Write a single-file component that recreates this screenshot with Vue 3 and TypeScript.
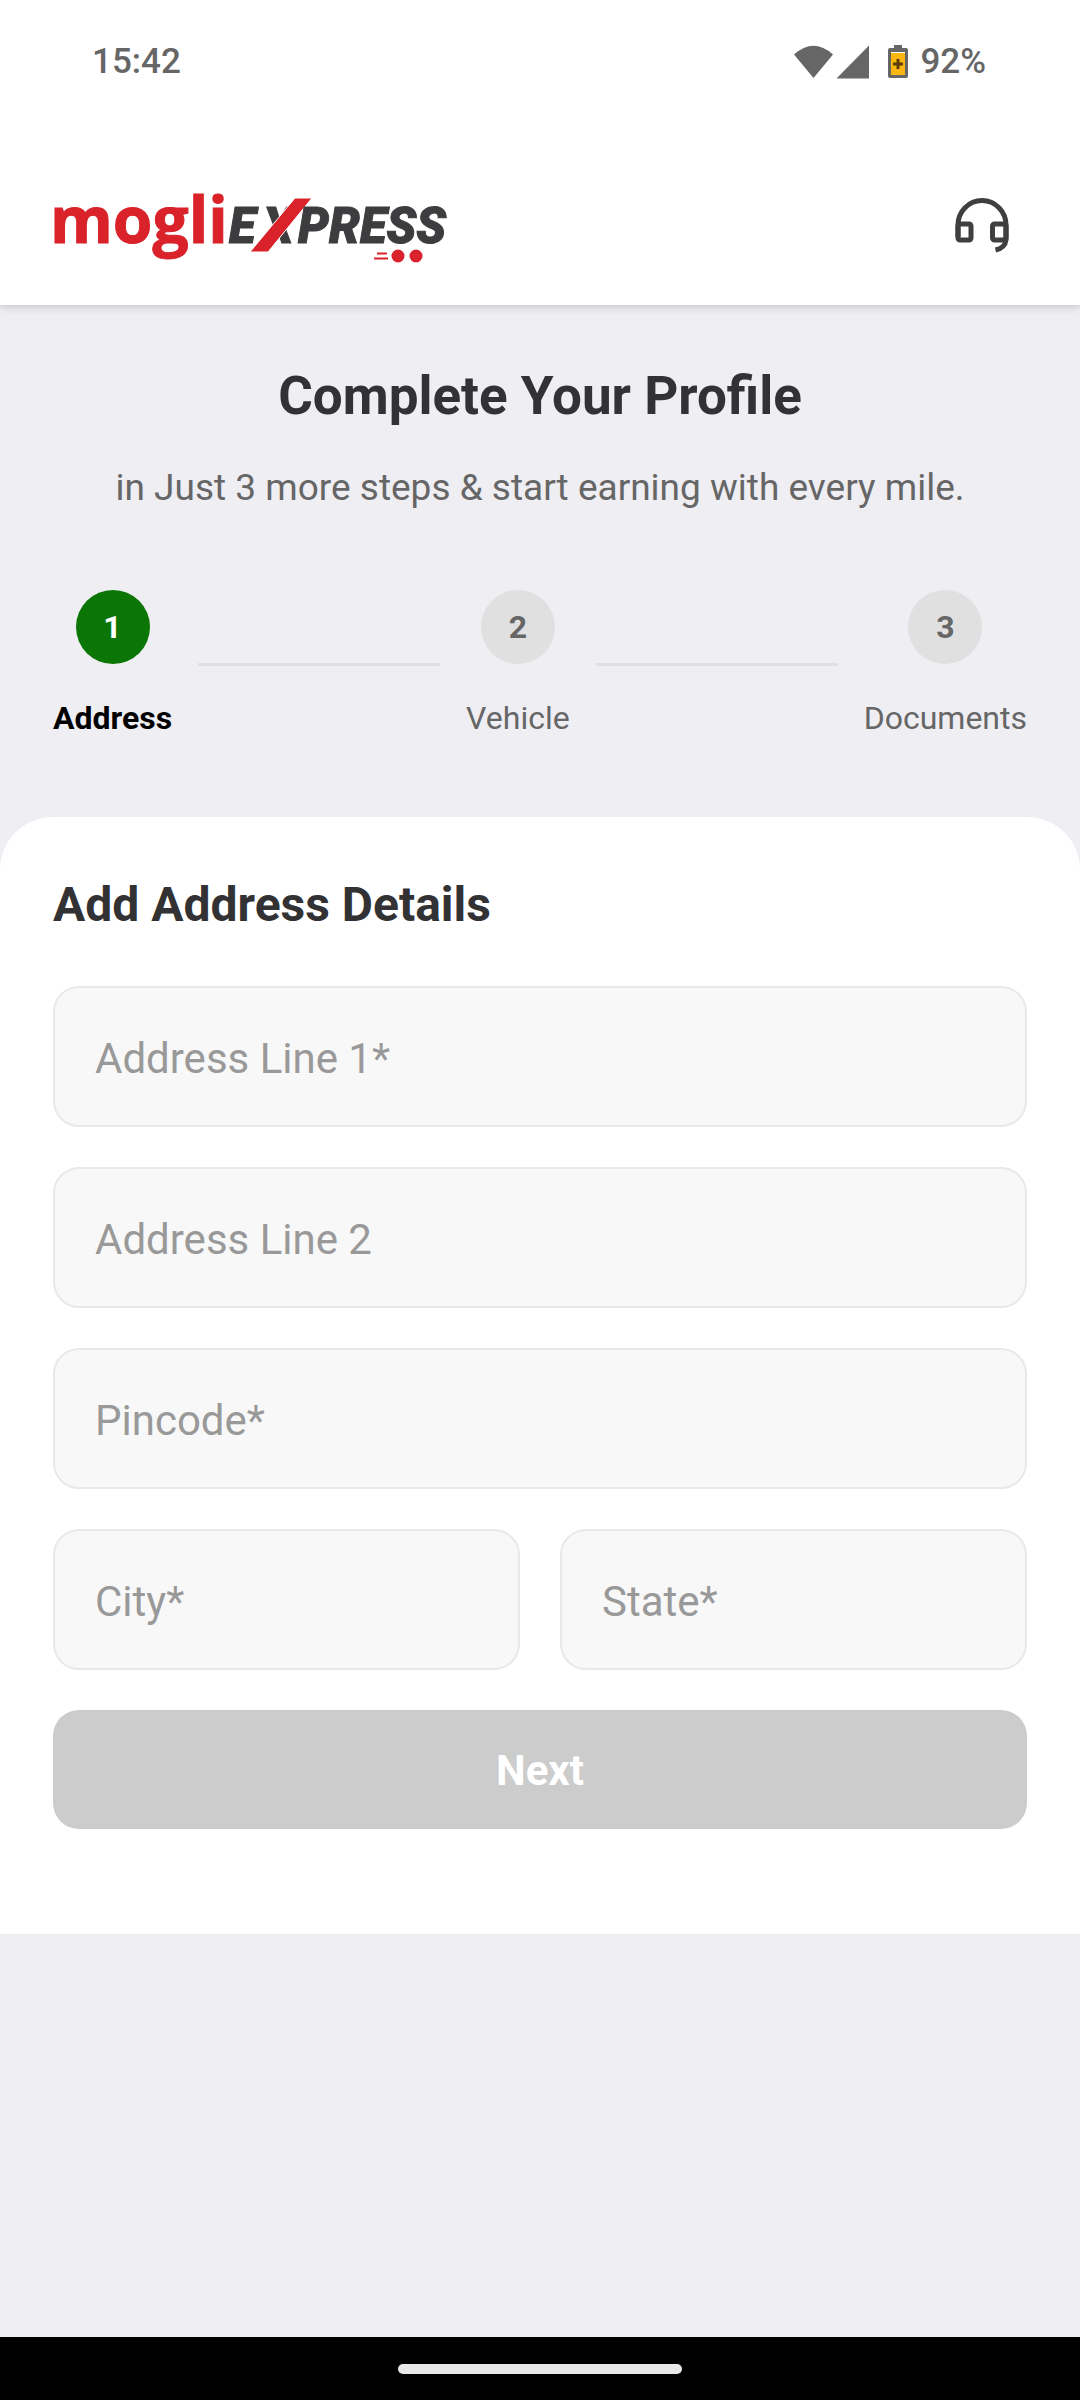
<script setup lang="ts">
import { computed, reactive } from 'vue'

interface Step {
  number: number
  label: string
}

interface Field {
  id: 'line1' | 'line2' | 'pincode' | 'city' | 'state'
  label: string
  half?: boolean
}

const steps: Step[] = [
  { number: 1, label: 'Address' },
  { number: 2, label: 'Vehicle' },
  { number: 3, label: 'Documents' },
]
const currentStep = 1

const fields: Field[] = [
  { id: 'line1', label: 'Address Line 1*' },
  { id: 'line2', label: 'Address Line 2' },
  { id: 'pincode', label: 'Pincode*' },
  { id: 'city', label: 'City*', half: true },
  { id: 'state', label: 'State*', half: true },
]

const address = reactive({ line1: '', line2: '', pincode: '', city: '', state: '' })

const complete = computed(
  () => !!(address.line1 && address.pincode && address.city && address.state),
)
</script>

<template>
  <div class="screen">
    <div class="status">
      <span>15:42</span>
      <div class="status-right">
        <svg class="signals" width="75" height="34" viewBox="0 0 75 34" aria-hidden="true">
          <path d="M0 9.500Q19.500-8 39 9.500L19.500 33Z" />
          <path d="M75 0.500V33.500H42.500Z" />
        </svg>
        <svg width="20" height="34" viewBox="0 0 20 34" aria-hidden="true">
          <path fill="#666" d="M6 0h8v3h4a2 2 0 0 1 2 2v26a2 2 0 0 1-2 2H2a2 2 0 0 1-2-2V5a2 2 0 0 1 2-2h4z" />
          <path fill="#fbb612" d="M3 8h14v22H3z" />
          <path fill="#fff" d="M3 7h14v1H3z" />
          <path fill="#5b3d06" d="M8.500 14h3v3.500H15v3h-3.500V24h-3v-3.500H5v-3h3.500z" />
        </svg>
        <span>92%</span>
      </div>
    </div>

    <header class="app-header">
      <svg class="logo" width="404" height="108" viewBox="48 172 404 108" role="img" aria-label="mogli EXPRESS">
        <text class="mogli" x="50" y="243">mogli</text>
        <text class="express" x="229" y="243">E</text>
        <text class="express" x="263" y="243">X</text>
        <path d="M295 198H312L268 252H250Z" fill="#d9222a" stroke="#fff" stroke-width="1" />
        <text class="express" x="298" y="243">PRESS</text>
        <circle cx="398" cy="256" r="6.500" fill="#d9222a" />
        <circle cx="416" cy="256" r="6.500" fill="#d9222a" />
        <path d="M377 253.500h10M374 258.500h14" stroke="#d9222a" stroke-width="2" />
      </svg>
      <button class="support" type="button" aria-label="Support">
        <svg width="56" height="58" viewBox="955 198 56 58" fill="none" stroke="#3f3f40" stroke-width="5" aria-hidden="true">
          <path d="M959 238V226a24 24.500 0 0 1 48 0V241Q1006 249 996.500 251" />
          <rect x="959" y="225" width="13" height="16" rx="2" />
          <rect x="993.500" y="225" width="13.500" height="16" rx="2" />
        </svg>
      </button>
    </header>

    <main>
      <section class="intro">
        <h1>Complete Your Profile</h1>
        <p>in Just 3 more steps &amp; start earning with every mile.</p>
        <ol class="steps">
          <template v-for="(step, i) in steps" :key="step.number">
            <li v-if="i > 0" class="line" aria-hidden="true"></li>
            <li class="step" :class="{ active: step.number === currentStep }">
              <span class="dot">{{ step.number }}</span>
              <span class="step-label">{{ step.label }}</span>
            </li>
          </template>
        </ol>
      </section>

      <form class="card" @submit.prevent>
        <h2>Add Address Details</h2>
        <div class="fields">
          <input
            v-for="field in fields"
            :id="field.id"
            :key="field.id"
            v-model="address[field.id]"
            type="text"
            :class="{ half: field.half }"
            :placeholder="field.label"
            :aria-label="field.label"
          />
          <button class="next" type="submit" :disabled="!complete">Next</button>
        </div>
      </form>
    </main>

    <div class="nav-bar"><span class="pill"></span></div>
  </div>
</template>

<style>
body {
  margin: 0;
}
</style>

<style scoped>
.screen {
  display: flex;
  flex-direction: column;
  min-height: 100vh;
  background: #efeef3;
  color: #666;
  font-family: Roboto, 'Liberation Sans', sans-serif;
}

.status {
  display: flex;
  align-items: center;
  justify-content: space-between;
  position: relative;
  z-index: 1;
  height: 123px;
  padding: 0 94px 0 92px;
  box-sizing: border-box;
  background: #fff;
  font-size: 35px;
  font-weight: 500;
}

.status-right {
  display: flex;
  align-items: center;
}

.signals {
  margin-right: 19px;
  fill: #666;
}

.status-right span {
  margin-left: 12px;
}

.app-header {
  display: flex;
  align-items: center;
  justify-content: space-between;
  padding: 49px 52px 25px 48px;
  background: #fff;
  box-shadow: 0 2px 8px rgba(0, 0, 0, 0.18);
}

.logo {
  display: block;
}

.mogli {
  fill: #d9222a;
  stroke: #d9222a;
  stroke-width: 1px;
  font: 700 64px 'Open Sans', sans-serif;
}

.express {
  fill: #3d3d3f;
  stroke: #3d3d3f;
  stroke-width: 1px;
  font: italic 900 49px Roboto, sans-serif;
}

.support {
  display: flex;
  align-items: center;
  justify-content: center;
  width: 92px;
  height: 92px;
  padding: 0;
  border: 0;
  background: none;
}

main {
  flex: 1;
}

.intro {
  padding: 61px 53px 78px;
}

h1 {
  margin: 0;
  color: #323234;
  font-size: 53px;
  font-weight: 700;
  line-height: 60px;
  text-align: center;
}

.intro p {
  margin: 40px 0 80px;
  font-size: 37px;
  line-height: 44px;
  text-align: center;
}

.steps {
  display: flex;
  align-items: center;
  gap: 26px;
  margin: 0;
  padding: 0;
  list-style: none;
}

.step {
  display: flex;
  flex-direction: column;
  align-items: center;
  gap: 33px;
  font-size: 32px;
}

.line {
  flex: 1;
  height: 3px;
  background: #e0e0e0;
}

.dot {
  width: 74px;
  border-radius: 50%;
  background: #e0e0e0;
  font-weight: 700;
  line-height: 74px;
  text-align: center;
}

.step-label {
  line-height: 42px;
}

.active .dot {
  background: #0b7505;
  color: #fff;
}

.active .step-label {
  color: #000;
  font-weight: 700;
}

.card {
  padding: 60px 53px 105px;
  border-radius: 53px 53px 0 0;
  background: #fff;
}

h2 {
  margin: 0 0 53px;
  color: #323234;
  font-size: 48px;
  font-weight: 700;
  line-height: 56px;
}

.fields {
  display: grid;
  grid-template-columns: 1fr 1fr;
  gap: 40px;
}

input {
  grid-column: span 2;
  min-width: 0;
  height: 141px;
  padding: 4px 40px 0;
  border: 2px solid #e9e9e9;
  border-radius: 26px;
  box-sizing: border-box;
  background: #f8f8f8;
  color: #323234;
  font: 400 42px Roboto, 'Liberation Sans', sans-serif;
}

input.half {
  grid-column: span 1;
}

input::placeholder {
  color: #999;
  opacity: 1;
}

.next {
  grid-column: span 2;
  height: 119px;
  padding: 2px 0 0;
  border: 0;
  border-radius: 26px;
  background: #0b7505;
  color: #fff;
  font: 700 42px Roboto, 'Liberation Sans', sans-serif;
}

.next:disabled {
  background: #ccc;
}

.nav-bar {
  display: flex;
  align-items: center;
  justify-content: center;
  height: 63px;
  background: #000;
}

.pill {
  width: 284px;
  height: 10px;
  border-radius: 5px;
  background: #e8e8e8;
}
</style>
